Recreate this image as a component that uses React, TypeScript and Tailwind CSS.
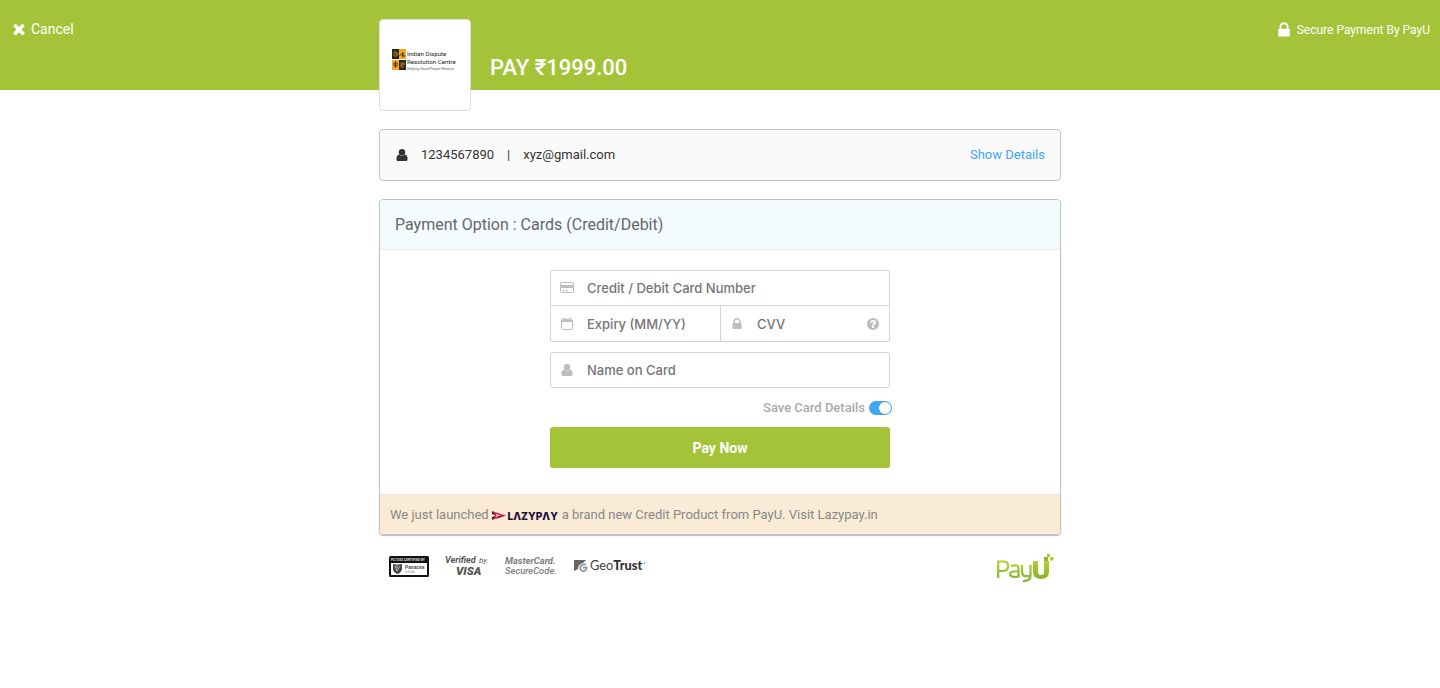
import { useState } from "react";

type IconProps = { className?: string };

function CloseIcon({ className }: IconProps) {
  return (
    <svg viewBox="150 150 1492 1492" fill="currentColor" className={className} aria-hidden="true">
      <path d="M1490 1322q0 40-28 68l-136 136q-28 28-68 28t-68-28l-294-294-294 294q-28 28-68 28t-68-28l-136-136q-28-28-28-68t28-68l294-294-294-294q-28-28-28-68t28-68l136-136q28-28 68-28t68 28l294 294 294-294q28-28 68-28t68 28l136 136q28 28 28 68t-28 68l-294 294 294 294q28 28 28 68z" />
    </svg>
  );
}

function LockIcon({ className }: IconProps) {
  return (
    <svg viewBox="0 0 1792 1792" fill="currentColor" className={className} aria-hidden="true">
      <path d="M640 768h512v-192q0-106-75-181t-181-75-181 75-75 181v192zm832 96v576q0 40-28 68t-68 28h-960q-40 0-68-28t-28-68v-576q0-40 28-68t68-28h32v-192q0-184 132-316t316-132 316 132 132 316v192h32q40 0 68 28t28 68z" />
    </svg>
  );
}

function UserIcon({ className }: IconProps) {
  return (
    <svg viewBox="0 0 14 14" fill="currentColor" className={className} aria-hidden="true">
      <circle cx="7" cy="4.2" r="3.2" />
      <path d="M4.2 6.4C2.2 6.6 1.5 8.6 1.5 10.8v.7c0 .9.6 1.5 1.5 1.5h8c.9 0 1.5-.6 1.5-1.5v-.7c0-2.2-.7-4.2-2.7-4.4C8.2 8.2 5.8 8.2 4.2 6.4z" />
    </svg>
  );
}

function HelpIcon({ className }: IconProps) {
  return (
    <svg viewBox="0 0 1792 1792" fill="currentColor" className={className} aria-hidden="true">
      <path d="M1024 1376v-192q0-14-9-23t-23-9h-192q-14 0-23 9t-9 23v192q0 14 9 23t23 9h192q14 0 23-9t9-23zm256-672q0-88-55.5-163t-138.5-116-170-41q-243 0-371 213-15 24 8 42l132 100q7 6 19 6 16 0 25-12 53-68 86-92 34-24 86-24 48 0 85.5 26t37.5 59q0 38-20 61t-68 45q-63 28-115.5 86.5t-52.5 125.5v36q0 14 9 23t23 9h192q14 0 23-9t9-23q0-19 21.5-49.5t54.5-49.5q32-18 49-28.5t46-35 44.5-48 28-60.5 12.5-81zm384 192q0 209-103 385.5t-279.5 279.5-385.5 103-385.5-103-279.5-279.5-103-385.5 103-385.5 279.5-279.5 385.5-103 385.5 103 279.5 279.5 103 385.5z" />
    </svg>
  );
}

function CardIcon({ className }: IconProps) {
  return (
    <svg viewBox="0 0 14 14" className={className} aria-hidden="true">
      <rect x=".5" y="1.5" width="13" height="10" rx=".7" fill="none" stroke="currentColor" />
      <path d="M1 4h12v3H1z" fill="currentColor" />
      <path d="M2 9.5h2M5 9.5h3" stroke="currentColor" />
    </svg>
  );
}

function CalendarIcon({ className }: IconProps) {
  return (
    <svg viewBox="0 0 14 14" fill="none" stroke="currentColor" className={className} aria-hidden="true">
      <rect x="1.5" y="2.5" width="11" height="10" rx=".7" />
      <path d="M1.5 4h11" strokeWidth="2" />
      <rect x="3" y="1" width="2" height="2.5" rx="1" fill="white" />
      <rect x="9" y="1" width="2" height="2.5" rx="1" fill="white" />
    </svg>
  );
}

function MerchantLogo() {
  return (
    <svg viewBox="0 0 66 22" className="h-[22px] w-[66px]" role="img" aria-label="Indian Dispute Resolution Centre">
      <path d="M0 0h7v10H0zM7 11h7v10H7z" fill="#29251f" />
      <path d="M7 0h7v10H7zM0 11h7v10H0z" fill="#f5a623" />
      <path d="M2 3h3v4H2zM3 5h4" fill="none" stroke="#b98328" strokeWidth=".8" />
      <path d="M7.5 7l3-3v3h3M11 3v5" fill="none" stroke="#3b2b12" strokeWidth=".9" />
      <path d="M3.5 12v7M2 14h3v3H2z" fill="none" stroke="#3b2b12" strokeWidth=".8" />
      <path d="M9 14v4h3M9 14h3v2H9" fill="none" stroke="#c8923a" strokeWidth=".8" />
      <g className="font-[Roboto,sans-serif]" fill="#222">
        <text x="15" y="6.5" fontSize="6.2">Indian Dispute</text>
        <text x="15" y="14.5" fontSize="6.2">Resolution Centre</text>
        <text x="15" y="20.5" fontSize="3.6" fill="#666">Helping Good People Resolve</text>
      </g>
    </svg>
  );
}

function LazypayLogo() {
  return (
    <svg viewBox="0 0 67 12" className="h-3 w-[67px]" role="img" aria-label="LazyPay">
      <path d="M0 2l14 4.500L0 11l3-4.500z" fill="#e5304f" />
      <path d="M0 2v3l5 1.500L0 8v3l4-4.500z" fill="#35113f" />
      <path d="M4 5l5 1.500-5 1.500z" fill="#fff" fillOpacity=".6" />
      <path d="M4 9.700l10-3.200-7 .5z" fill="#8d1538" />
      <text x="15.5" y="10.500" fontSize="10.200" fontWeight="800" fill="#1b0b3a" className="font-[Inter,sans-serif]">
        LΛZYPΛY
      </text>
    </svg>
  );
}

function PciBadge() {
  return (
    <svg viewBox="0 0 40 21" className="h-[21px] w-10" role="img" aria-label="PCI DSS certified by Panacea">
      <rect width="40" height="21" rx="1.5" fill="#111" />
      <path d="M2 7h36v12H2z" fill="#fff" />
      <path d="M4 8q4 1 9 0v5q-1 4-4.5 5Q4 16 4 13z" fill="#444" />
      <path d="M6 10l2 5 3-5M8 9v3" fill="none" stroke="#ddd" strokeWidth=".8" />
      <g className="font-[Roboto,sans-serif]">
        <text x="2" y="5" fontSize="3.3" fontWeight="700" fill="#ddd">PCI DSS CERTIFIED BY</text>
        <text x="16" y="13" fontSize="5" fontWeight="700" fill="#555">Panacea</text>
        <text x="16" y="17" fontSize="3" fill="#888">InfoSec</text>
      </g>
    </svg>
  );
}

function VisaBadge() {
  return (
    <svg viewBox="0 0 44 22" className="h-[22px] w-11" role="img" aria-label="Verified by Visa">
      <g className="font-[Roboto,sans-serif]" fill="#555" fontStyle="italic">
        <text x="0" y="8" fontSize="9" fontWeight="700">Verified</text>
        <text x="34" y="8" fontSize="8">by</text>
        <text x="11" y="20" fontSize="11.5" fontWeight="900">VISA</text>
      </g>
    </svg>
  );
}

function MasterCardBadge() {
  return (
    <svg viewBox="0 0 53 22" className="h-[22px] w-[53px]" role="img" aria-label="MasterCard SecureCode">
      <g className="font-[Roboto,sans-serif]" fill="#7d7d7d" fontStyle="italic" fontSize="9.4">
        <text x="0" y="9" fontWeight="700">MasterCard.</text>
        <text x="0" y="19" fontWeight="500">SecureCode.</text>
      </g>
    </svg>
  );
}

function GeoTrustBadge() {
  return (
    <svg viewBox="0 0 72 16" className="h-4 w-[72px]" role="img" aria-label="GeoTrust">
      <path d="M0 2h12L9 5Q4 6 4 11l-4 2z" fill="#666" />
      <path d="M12 6.500q-4-1-5.500 2-1 3.500 2 4.500 4 .5 4-3.500H9" fill="none" stroke="#999" strokeWidth="1.800" />
      <text x="16" y="12" className="font-[Lato,sans-serif]" fill="#444" fontSize="12.8">
        Geo<tspan fontWeight="900" fill="#333">Trust</tspan>
      </text>
      <circle cx="70.500" cy="5" r=".7" fill="#777" />
    </svg>
  );
}

function PayULogo() {
  return (
    <svg viewBox="0 0 58 30" className="h-[30px] w-[58px]" role="img" aria-label="PayU">
      <defs>
        <linearGradient id="payu" gradientUnits="userSpaceOnUse" x1="0" y1="6" x2="0" y2="29">
          <stop offset="0" stopColor="#b8d432" />
          <stop offset="1" stopColor="#7fae2c" />
        </linearGradient>
      </defs>
      <g fill="none" stroke="url(#payu)" strokeWidth="2.2">
        <path d="M2.200 25V8.500h5q5 0 5 4.500t-5 5H2.500" />
        <path d="M15 13q7.500-2 7.500 2v8.500q-8.500 1.200-8.500-2.500 0-3.200 8.500-2.700" />
        <path d="M26 12v6q0 5.200 4 5.200h4M34.500 12v11q0 5-7.500 5" />
      </g>
      <path d="M37 8h5v11q0 3 3 3t3-3V8h5v11q0 7-8 7t-8-7z" fill="url(#payu)" />
      <path d="M48 4h4v4h-4z" fill="#8cb82c" />
      <path d="M51 1h3v3h-3zM54 4h3.500v3.500H54z" fill="#b0d036" />
    </svg>
  );
}

const inputClass =
  "w-full min-w-0 bg-transparent pt-0.5 font-[Inter,sans-serif] text-[13px] font-medium text-[#555] placeholder:text-[#757575] focus:outline-none";

export default function App() {
  const [saveCard, setSaveCard] = useState(true);

  return (
    <div className="min-h-screen bg-white font-[Roboto,sans-serif] text-[#333]">
      <header className="grid h-[90px] grid-cols-[1fr_minmax(0,682px)_1fr] bg-[#a5c339] text-white">
        <div className="pt-[19px] pl-3">
          <button className="flex items-center gap-[5px] text-sm">
            <CloseIcon className="h-3.5 w-3.5" />
            Cancel
          </button>
        </div>
        <div className="flex items-start pt-[19px]">
          <div className="flex h-[92px] w-[92px] shrink-0 items-center justify-center rounded border border-[#ddd] bg-white pb-2.5">
            <MerchantLogo />
          </div>
          <h1 className="pt-[33px] pl-[19px] text-[22px] leading-8 font-medium">PAY ₹1999.00</h1>
        </div>
        <div className="flex items-start justify-end pt-5 pr-2.5">
          <p className="flex items-center gap-1 text-xs leading-5 whitespace-nowrap">
            <LockIcon className="h-[18px] w-[18px]" />
            Secure Payment By PayU
          </p>
        </div>
      </header>

      <main className="mx-auto max-w-[682px] pt-[39px]">
        <section className="flex h-[52px] items-center justify-between rounded border border-[#c4c4c4] bg-[#fafafa] px-[15px] text-[13px]">
          <div className="flex items-center">
            <UserIcon className="mr-3 h-3.5 w-3.5" />
            <span>1234567890</span>
            <span className="px-[13px]">|</span>
            <span>xyz@gmail.com</span>
          </div>
          <a href="#details" className="text-[#42a5f5]">
            Show Details
          </a>
        </section>

        <section className="mt-[18px] overflow-hidden rounded border border-[#c1c4c7] shadow-[0_1px_1px_#bbb]">
          <h2 className="border-b border-[#e3eaee] bg-[#f4fcff] px-[15px] py-[9px] text-base leading-[31px] text-[#666]">
            Payment Option : Cards (Credit/Debit)
          </h2>
          <form className="mx-auto w-full max-w-[340px] pt-5 pb-[26px]" onSubmit={(e) => e.preventDefault()}>
            <div className="rounded-[3px] border border-[#d4d4d4] text-[#bdbdbd]">
              <label className="flex h-[35px] items-center gap-[13px] border-b border-[#d4d4d4] px-[9px]">
                <CardIcon className="h-3.5 w-3.5 shrink-0" />
                <input className={inputClass} placeholder="Credit / Debit Card Number" aria-label="Credit / Debit Card Number" />
              </label>
              <div className="flex h-[35px]">
                <label className="flex w-1/2 items-center gap-[13px] px-[9px]">
                  <CalendarIcon className="h-3.5 w-3.5 shrink-0" />
                  <input className={inputClass} placeholder="Expiry (MM/YY)" aria-label="Expiry (MM/YY)" />
                </label>
                <div className="flex w-1/2 items-center gap-[13px] border-l border-[#d4d4d4] px-[9px]">
                  <LockIcon className="h-3.5 w-3.5 shrink-0" />
                  <input className={inputClass} placeholder="CVV" aria-label="CVV" />
                  <button type="button" aria-label="What is CVV?">
                    <HelpIcon className="h-3.5 w-3.5" />
                  </button>
                </div>
              </div>
            </div>
            <label className="mt-2.5 flex h-9 items-center gap-[13px] rounded-[3px] border border-[#d4d4d4] px-[9px] text-[#bdbdbd]">
              <UserIcon className="h-3.5 w-3.5 shrink-0" />
              <input className={inputClass} placeholder="Name on Card" aria-label="Name on Card" />
            </label>
            <label className="-mr-0.5 flex h-[39px] items-center justify-end gap-1 text-[13px] font-medium text-[#aaa]">
              Save Card Details
              <input
                type="checkbox"
                className="peer sr-only"
                checked={saveCard}
                onChange={(e) => setSaveCard(e.target.checked)}
              />
              <span className="flex h-3.5 w-[23px] items-center rounded-full bg-[#bbb] px-px peer-checked:justify-end peer-checked:bg-[#42a5f5]">
                <span className="h-3 w-3 rounded-full bg-white" />
              </span>
            </label>
            <button className="h-[41px] w-full rounded-[3px] bg-[#a5c339] text-sm font-bold text-white">Pay Now</button>
          </form>
          <p className="flex h-10 items-center gap-[3px] border-t border-[#f1e8de] bg-[#faebd7] px-2.5 text-[13px] text-[#888]">
            We just launched
            <LazypayLogo />
            <span>
              a brand new Credit Product from PayU. Visit <a href="#lazypay">Lazypay.in</a>
            </span>
          </p>
        </section>

        <footer className="flex items-start justify-between pt-[18px] pr-[7px] pl-2.5">
          <div className="flex items-center gap-4 pt-0.5">
            <PciBadge />
            <VisaBadge />
            <MasterCardBadge />
            <GeoTrustBadge />
          </div>
          <PayULogo />
        </footer>
      </main>
    </div>
  );
}
